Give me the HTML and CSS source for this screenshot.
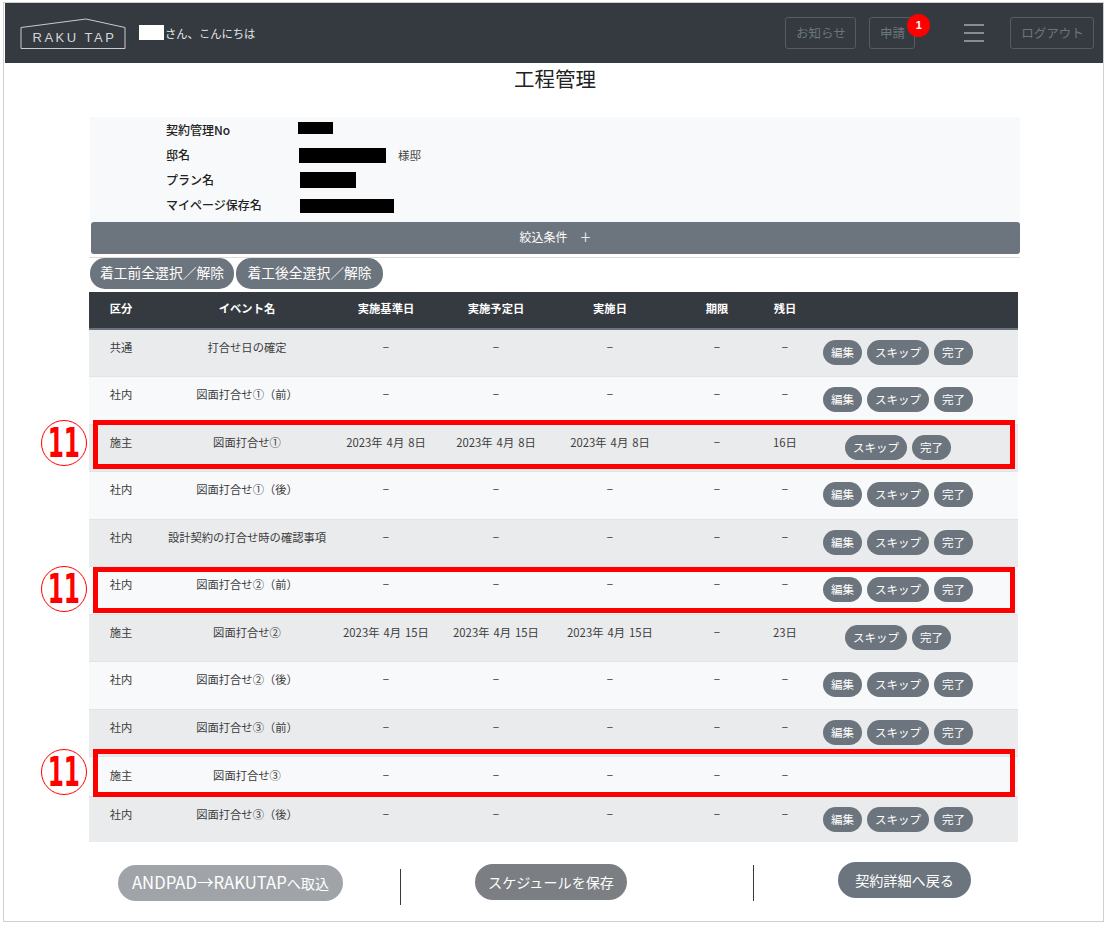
FILE: index.html
```html
<!DOCTYPE html>
<html lang="ja">
<head>
    <meta charset="UTF-8">
    <title>工程管理</title>
    <link rel="stylesheet" href="styles.css">
</head>
<body>
<div class="frame">
    <header class="topbar">
        <svg class="logo" width="108" height="32" viewBox="0 0 108 32">
            <path d="M1 9.5 L66 1 L105 9.5 V30.5 H1 Z" fill="none" stroke="#c9cbcd" stroke-width="1"/>
            <text x="12.5" y="23.5" class="logoText">RAKU TAP</text>
        </svg>
        <span class="maskWhite"></span>
        <span class="greeting">さん、こんにちは</span>
        <a class="navBtn navNotice">お知らせ</a>
        <a class="navBtn navApply">申請<span class="badge">1</span></a>
        <span class="burger"><i></i><i></i><i></i></span>
        <a class="navBtn navLogout">ログアウト</a>
    </header>

    <main class="content">
        <h1 class="title">工程管理</h1>

        <section class="info">
            <div class="infoRow"><span class="infoLabel">契約管理No</span><span class="mask maskNo"></span></div>
            <div class="infoRow"><span class="infoLabel">邸名</span><span class="mask maskName"></span><span class="suffix">様邸</span></div>
            <div class="infoRow"><span class="infoLabel">プラン名</span><span class="mask maskPlan"></span></div>
            <div class="infoRow"><span class="infoLabel">マイページ保存名</span><span class="mask maskSave"></span></div>
        </section>

        <div class="filterBar">絞込条件　＋</div>

        <div class="selectRow">
            <button class="selectBtn">着工前全選択／解除</button>
            <button class="selectBtn">着工後全選択／解除</button>
        </div>

        <table class="schedule">
            <colgroup>
                <col class="c1"><col class="c2"><col class="c3"><col class="c4"><col class="c5"><col class="c6"><col class="c7"><col class="c8">
            </colgroup>
            <thead>
                <tr><th>区分</th><th>イベント名</th><th>実施基準日</th><th>実施予定日</th><th>実施日</th><th>期限</th><th>残日</th><th></th></tr>
            </thead>
            <tbody>
                <tr>
                    <td>共通</td><td>打合せ日の確定</td><td>−</td><td>−</td><td>−</td><td>−</td><td>−</td>
                    <td class="actions"><button class="pill">編集</button><button class="pill">スキップ</button><button class="pill">完了</button></td>
                </tr>
                <tr>
                    <td>社内</td><td>図面打合せ①（前）</td><td>−</td><td>−</td><td>−</td><td>−</td><td>−</td>
                    <td class="actions"><button class="pill">編集</button><button class="pill">スキップ</button><button class="pill">完了</button></td>
                </tr>
                <tr>
                    <td>施主</td><td>図面打合せ①</td><td>2023年 4月 8日</td><td>2023年 4月 8日</td><td>2023年 4月 8日</td><td>−</td><td>16日</td>
                    <td class="actions"><button class="pill">スキップ</button><button class="pill">完了</button></td>
                </tr>
                <tr>
                    <td>社内</td><td>図面打合せ①（後）</td><td>−</td><td>−</td><td>−</td><td>−</td><td>−</td>
                    <td class="actions"><button class="pill">編集</button><button class="pill">スキップ</button><button class="pill">完了</button></td>
                </tr>
                <tr>
                    <td>社内</td><td>設計契約の打合せ時の確認事項</td><td>−</td><td>−</td><td>−</td><td>−</td><td>−</td>
                    <td class="actions"><button class="pill">編集</button><button class="pill">スキップ</button><button class="pill">完了</button></td>
                </tr>
                <tr>
                    <td>社内</td><td>図面打合せ②（前）</td><td>−</td><td>−</td><td>−</td><td>−</td><td>−</td>
                    <td class="actions"><button class="pill">編集</button><button class="pill">スキップ</button><button class="pill">完了</button></td>
                </tr>
                <tr>
                    <td>施主</td><td>図面打合せ②</td><td>2023年 4月 15日</td><td>2023年 4月 15日</td><td>2023年 4月 15日</td><td>−</td><td>23日</td>
                    <td class="actions"><button class="pill">スキップ</button><button class="pill">完了</button></td>
                </tr>
                <tr>
                    <td>社内</td><td>図面打合せ②（後）</td><td>−</td><td>−</td><td>−</td><td>−</td><td>−</td>
                    <td class="actions"><button class="pill">編集</button><button class="pill">スキップ</button><button class="pill">完了</button></td>
                </tr>
                <tr>
                    <td>社内</td><td>図面打合せ③（前）</td><td>−</td><td>−</td><td>−</td><td>−</td><td>−</td>
                    <td class="actions"><button class="pill">編集</button><button class="pill">スキップ</button><button class="pill">完了</button></td>
                </tr>
                <tr class="short">
                    <td>施主</td><td>図面打合せ③</td><td>−</td><td>−</td><td>−</td><td>−</td><td>−</td>
                    <td class="actions"></td>
                </tr>
                <tr class="last">
                    <td>社内</td><td>図面打合せ③（後）</td><td>−</td><td>−</td><td>−</td><td>−</td><td>−</td>
                    <td class="actions"><button class="pill">編集</button><button class="pill">スキップ</button><button class="pill">完了</button></td>
                </tr>
            </tbody>
        </table>

        <div class="bottomRow">
            <button class="bigBtn importBtn"><span class="latin">ANDPAD→RAKUTAP</span>へ取込</button>
            <span class="divider dividerA"></span>
            <button class="bigBtn saveBtn">スケジュールを保存</button>
            <span class="divider dividerB"></span>
            <button class="bigBtn backBtn">契約詳細へ戻る</button>
        </div>
    </main>

    <!-- annotations on top of the screenshot -->
    <div class="redBox boxA"></div>
    <div class="redBox boxB"></div>
    <div class="redBox boxC"></div>
    <span class="circleNo noA"><b>11</b></span>
    <span class="circleNo noB"><b>11</b></span>
    <span class="circleNo noC"><b>11</b></span>
</div>
</body>
</html>
```

FILE: styles.css
```css
* {
    box-sizing: border-box;
}

body {
    margin: 0;
    background: #fff;
    font-family: "Noto Sans CJK JP", "Noto Sans", sans-serif;
    color: #212529;
}

.frame {
    position: relative;
    width: 1101px;
    height: 920px;
    margin: 2px 0 0 3px;
    border: 1px solid #d0d0d0;
}

/* header */
.topbar {
    display: flex;
    align-items: center;
    height: 60px;
    margin-left: 1px;
    background: #343a40;
    padding-left: 15px;
}

.logo {
    flex: none;
    margin-top: 1px;
}

.logoText {
    font-family: "Liberation Sans", sans-serif;
    font-size: 13px;
    letter-spacing: 2.5px;
    fill: #d5d6d8;
}

.maskWhite {
    width: 25px;
    height: 15px;
    margin: 0 1px 1px 11px;
    background: #fff;
}

.greeting {
    font-size: 11.3px;
    line-height: 16px;
    color: #e6e6e6;
    margin-bottom: 1px;
}

.navBtn {
    position: relative;
    display: block;
    height: 32px;
    border: 1px solid #565c62;
    border-radius: 3px;
    font-size: 12.5px;
    line-height: 30px;
    text-align: center;
    color: #6c757d;
}

.navNotice {
    width: 71px;
    margin-left: 530px;
}

.navApply {
    width: 46px;
    margin-left: 13px;
}

.navLogout {
    width: 84px;
    margin-left: 26px;
}

.badge {
    position: absolute;
    top: -4px;
    right: -16px;
    width: 23px;
    height: 23px;
    border-radius: 50%;
    background: #f00;
    color: #fff;
    font-family: "Liberation Sans", sans-serif;
    font-size: 11px;
    font-weight: bold;
    line-height: 23px;
}

.burger {
    display: flex;
    flex-direction: column;
    gap: 6px;
    width: 20px;
    margin-left: 49px;
}

.burger i {
    display: block;
    height: 2px;
    background: #8a8d90;
}

/* main */
.content {
    margin-left: 85px;
    width: 931px;
}

.title {
    margin: 0;
    height: 54px;
    padding: 0 0 0 1px;
    font-size: 20.5px;
    font-weight: normal;
    line-height: 30px;
    text-align: center;
    color: #222;
}

.info {
    display: flex;
    flex-direction: column;
    height: 105px;
    padding-top: 1px;
    margin-left: 1px;
    background: #f8f9fa;
}

.infoRow {
    display: flex;
    align-items: center;
    height: 25px;
    padding-left: 76px;
}

.infoLabel {
    width: 132px;
    margin-bottom: 2px;
    font-size: 12px;
    font-weight: 500;
    line-height: 16px;
    color: #222;
}

.mask {
    background: #000;
}

.maskNo {
    width: 35px;
    height: 12px;
    margin-bottom: 5px;
}

.maskName {
    width: 87px;
    height: 15px;
    margin-left: 1px;
}

.maskPlan {
    width: 56px;
    height: 16px;
    margin-left: 2px;
    margin-bottom: 2px;
}

.maskSave {
    width: 94px;
    height: 14px;
    margin-left: 2px;
}

.suffix {
    margin: 0 0 2px 12px;
    font-size: 11.5px;
    line-height: 16px;
    color: #444;
}

.filterBar {
    height: 32px;
    margin-left: 2px;
    border-radius: 3px;
    background: #6c757d;
    color: #fff;
    font-size: 12px;
    line-height: 29px;
    text-align: center;
}

.selectRow {
    display: flex;
    gap: 2px;
    height: 35px;
    margin-top: 3px;
    padding-left: 1px;
    border-top: 1px solid #dcdcdc;
}

.selectBtn {
    width: 144px;
    height: 31px;
    padding: 0 0 3px;
    border: 0;
    border-radius: 15px;
    background: #6c757d;
    color: #fff;
    font-family: inherit;
    font-size: 13.8px;
    line-height: 26px;
}

.selectBtn + .selectBtn {
    width: 147px;
}

/* table */
.schedule {
    width: 929px;
    table-layout: fixed;
    border-collapse: collapse;
    font-size: 11.3px;
    line-height: 16px;
    text-align: center;
}

.c1 { width: 64px; }
.c2 { width: 188px; }
.c3 { width: 90px; }
.c4 { width: 130px; }
.c5 { width: 98px; }
.c6 { width: 96px; }
.c7 { width: 60px; }
.c8 { width: 203px; }

.schedule th {
    height: 37px;
    padding: 0 0 4px;
    background: #343a40;
    border-bottom: 2px solid #6c757d;
    color: #fff;
    font-weight: bold;
    white-space: nowrap;
}

.schedule td {
    height: 47.5px;
    padding: 9px 0 0;
    vertical-align: top;
    border-top: 1px solid #e1e3e6;
    color: #3c3c3c;
    white-space: nowrap;
    word-spacing: 1.5px;
}

/* 期限 column sits right of centre of its cell */
.schedule th:nth-child(6),
.schedule td:nth-child(6) {
    padding-left: 20px;
}

.schedule tbody tr:nth-child(odd) td {
    background: #eaebed;
}

.schedule tbody tr:nth-child(even) td {
    background: #f8f9fa;
}

.schedule tr.short td {
    height: 40px;
    padding-top: 10px;
}

.schedule tr.last td {
    height: 45px;
}

.schedule td.actions {
    padding: 10px 37px 0 0;
}

.pill {
    height: 25px;
    padding: 0 8px;
    margin-left: 5px;
    border: 0;
    border-radius: 13px;
    background: #6c757d;
    color: #fff;
    font-family: inherit;
    font-size: 11.5px;
    line-height: 23px;
}

.pill:first-child {
    margin-left: 0;
}

/* bottom buttons */
.bottomRow {
    display: flex;
    align-items: flex-start;
    height: 66px;
    padding-top: 20px;
}

.bigBtn {
    height: 36px;
    padding: 0;
    border: 0;
    border-radius: 18px;
    color: #fff;
    font-family: inherit;
    font-size: 14.1px;
    line-height: 34px;
}

.latin {
    font-size: 16.7px;
}

.importBtn {
    width: 225px;
    margin: 3px 0 0 29px;
    background: #a0a4a9;
}

.saveBtn {
    width: 152px;
    margin: 2px 0 0 74px;
    background: #7b7e82;
}

.backBtn {
    width: 133px;
    margin-left: 84px;
    background: #6c757d;
}

.divider {
    width: 1px;
    height: 36px;
    background: #343a40;
}

.dividerA {
    margin: 7px 0 0 57px;
}

.dividerB {
    margin: 3px 0 0 126px;
}

/* red annotations */
.redBox {
    position: absolute;
    left: 89px;
    width: 922px;
    border: 5px solid #f00;
}

.boxA {
    top: 417px;
    height: 49px;
}

.boxB {
    top: 564px;
    height: 46px;
}

.boxC {
    top: 746px;
    height: 48px;
}

.circleNo {
    position: absolute;
    left: 37px;
    display: flex;
    align-items: center;
    justify-content: center;
    width: 46px;
    height: 46px;
    border: 1px solid #f00;
    border-radius: 50%;
    background: #fff;
    color: #f00;
}

.circleNo b {
    font-family: "DejaVu Sans", sans-serif;
    font-size: 40px;
    line-height: 44px;
    transform: scaleX(0.58);
}

.noA {
    top: 417px;
}

.noB {
    top: 563px;
}

.noC {
    top: 746px;
}
```
